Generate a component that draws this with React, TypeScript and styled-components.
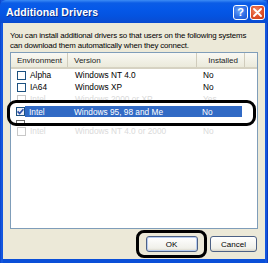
import styled, { createGlobalStyle } from 'styled-components';

const GlobalStyle = createGlobalStyle`
	html, body {
		margin: 0;
		padding: 0;
		background: #ffffff;
	}
	* {
		box-sizing: border-box;
	}
`;

interface Driver {
	env: string;
	version: string;
	installed: string;
	faint?: boolean;
	gap?: boolean;
}

const drivers: Driver[] = [
	{ env: 'Alpha', version: 'Windows NT 4.0', installed: 'No' },
	{ env: 'IA64', version: 'Windows XP', installed: 'No' },
	{ env: 'Intel', version: 'Windows 2000 or XP', installed: 'Yes', faint: true },
	{ env: 'Intel', version: 'Windows 95, 98 and Me', installed: 'No' },
	{ env: 'Intel', version: 'Windows NT 4.0 or 2000', installed: 'No', faint: true, gap: true },
];

export default function App() {
	return (
		<>
			<GlobalStyle />
			<Window>
				<TitleBar>
					<Title>Additional Drivers</Title>
					<CaptionButtons>
						<CaptionButton $kind='help'>?</CaptionButton>
						<CaptionButton $kind='close'>
							<svg width='9' height='9' viewBox='0 0 9 9'>
								<path d='M1 1 L8 8 M8 1 L1 8' stroke='white' strokeWidth='1.8' strokeLinecap='round' />
							</svg>
						</CaptionButton>
					</CaptionButtons>
				</TitleBar>
				<Body>
					<Description>
						<Line>You can install additional drivers so that users on the following systems</Line>
						<Line>can download them automatically when they connect.</Line>
					</Description>
					<ListBox>
						<HeaderRow>
							<HeaderCell $width={57}>Environment</HeaderCell>
							<HeaderCell $width={129}>Version</HeaderCell>
							<HeaderCell $width={48} $right>Installed</HeaderCell>
							<HeaderFill />
						</HeaderRow>
						{drivers.map((d, i) => (
							<Row key={i} $faint={d.faint} $gap={d.gap}>
								<Check $faint={d.faint} />
								<EnvCell>{d.env}</EnvCell>
								<VersionCell>{d.version}</VersionCell>
								<InstalledCell>{d.installed}</InstalledCell>
							</Row>
						))}
						<Callout>
							<CalloutRow>
								<Check $checked>
									<svg width='7' height='7' viewBox='0 0 7 7'>
										<path d='M0.6 3.4 L2.6 5.5 L6.4 1.2' stroke='#2b4fa8' strokeWidth='1.7' fill='none' />
									</svg>
								</Check>
								<Selected>
									<EnvCell>Intel</EnvCell>
									<VersionCell>Windows 95, 98 and Me</VersionCell>
									<InstalledCell>No</InstalledCell>
								</Selected>
							</CalloutRow>
							<PeekCheck />
						</Callout>
					</ListBox>
					<ButtonRow>
						<ButtonCallout>
							<Button $focused $width={52}>OK</Button>
						</ButtonCallout>
						<Button $width={47}>Cancel</Button>
					</ButtonRow>
				</Body>
			</Window>
		</>
	);
}

const Window = styled.div`
	width: 268px;
	height: 263px;
	display: flex;
	flex-direction: column;
	background: linear-gradient(90deg, #0842c8 0, #1a5ee6 2px, #0a4fd8 3px, #0a4fd8 265px, #1a5ee6 266px, #0634b4 268px);
	padding: 0 3px 4px 3px;
	font-family: 'Liberation Sans', Arial, sans-serif;
	user-select: none;
`;

const TitleBar = styled.div`
	height: 23px;
	margin: 0 -3px;
	padding: 0 3px 0 6px;
	display: flex;
	align-items: center;
	justify-content: space-between;
	background: linear-gradient(#3d8cf5 0, #0b5ce6 3px, #0558e8 9px, #0453e0 16px, #0a4cd2 22px, #0848cf 23px);
	border-radius: 6px 6px 0 0;
`;

const Title = styled.div`
	color: #ffffff;
	font-weight: 700;
	font-size: 10.5px;
	letter-spacing: 0.1px;
	text-shadow: 1px 1px 0 #0b2f8e;
	margin-top: 1px;
`;

const CaptionButtons = styled.div`
	display: flex;
	gap: 2px;
	margin-top: 1px;
`;

const CaptionButton = styled.div<{ $kind: 'help' | 'close' }>`
	width: 15px;
	height: 15px;
	border: 1px solid #ffffff;
	border-radius: 3px;
	display: flex;
	align-items: center;
	justify-content: center;
	color: #ffffff;
	font-weight: 700;
	font-size: 11px;
	background: ${({ $kind }) =>
		$kind === 'close'
			? 'radial-gradient(circle at 40% 35%, #f08b68 0, #e0502a 55%, #c23a14 100%)'
			: 'radial-gradient(circle at 40% 35%, #6ea4f8 0, #2f6fe6 55%, #1c55d0 100%)'};
`;

const Body = styled.div`
	flex: 1;
	background: #ece9d8;
	padding: 7px 7px 1px 7px;
	display: flex;
	flex-direction: column;
`;

const Description = styled.div`
	height: 22px;
	padding-top: 1px;
	color: #000000;
`;

const Line = styled.div`
	font-size: 7.9px;
	letter-spacing: -0.16px;
	line-height: 9.5px;
	white-space: nowrap;
`;

const ListBox = styled.div`
	position: relative;
	height: 177px;
	border: 1px solid #7f9db9;
	background: #ffffff;
	font-size: 8.3px;
	color: #000000;
`;

const HeaderRow = styled.div`
	display: flex;
	height: 16px;
	background: linear-gradient(#f9f8f3, #ebeadb);
	border-bottom: 2px solid #d6d2c2;
	font-size: 8px;
`;

const HeaderCell = styled.div<{ $width: number; $right?: boolean }>`
	width: ${({ $width }) => $width}px;
	padding: 0 6px;
	display: flex;
	align-items: center;
	justify-content: ${({ $right }) => ($right ? 'flex-end' : 'flex-start')};
	border-right: 1px solid #d0ccbc;
	color: #222222;
`;

const HeaderFill = styled.div`
	flex: 1;
`;

const Row = styled.div<{ $faint?: boolean; $gap?: boolean }>`
	display: flex;
	align-items: center;
	height: 12px;
	padding-left: 6px;
	color: ${({ $faint }) => ($faint ? '#dadada' : '#000000')};
	margin-top: ${({ $gap }) => ($gap ? '8px' : '0')};
`;

const Check = styled.div<{ $checked?: boolean; $faint?: boolean }>`
	width: 9px;
	height: 9px;
	flex-shrink: 0;
	border: 1px solid ${({ $faint }) => ($faint ? '#c8c8c8' : '#1c5180')};
	background: ${({ $checked }) => ($checked ? '#eef0f6' : '#ffffff')};
	display: flex;
	align-items: center;
	justify-content: center;
	margin-right: 3px;
`;

const EnvCell = styled.div`
	width: 46px;
	white-space: nowrap;
	padding-left: 1px;
`;

const VersionCell = styled.div`
	width: 128px;
	white-space: nowrap;
`;

const InstalledCell = styled.div`
	white-space: nowrap;
`;

const Callout = styled.div`
	position: absolute;
	left: -4px;
	top: 47px;
	width: 249px;
	height: 26px;
	border: 3px solid #000000;
	border-radius: 9px;
	background: #ffffff;
	padding: 3px 0 0 6px;
	overflow: hidden;
`;

const CalloutRow = styled.div`
	display: flex;
	align-items: center;
	height: 11px;
`;

const PeekCheck = styled.div`
	width: 9px;
	height: 9px;
	margin-top: 3px;
	border: 1px solid #6a6a6a;
	border-bottom: none;
`;

const Selected = styled.div`
	display: flex;
	align-items: center;
	width: 217px;
	height: 11px;
	margin-left: -3px;
	padding-left: 3px;
	background: #316ac5;
	color: #ffffff;
`;

const ButtonRow = styled.div`
	display: flex;
	justify-content: flex-end;
	align-items: center;
	gap: 3px;
	margin-top: 1px;
	height: 28px;
	padding-right: 1px;
`;

const ButtonCallout = styled.div`
	width: 71px;
	height: 28px;
	border: 3px solid #000000;
	border-radius: 8px;
	display: flex;
	align-items: center;
	justify-content: center;
`;

const Button = styled.div<{ $width: number; $focused?: boolean }>`
	width: ${({ $width }) => $width}px;
	height: 16px;
	border: 1px solid #4d6185;
	border-radius: 3px;
	background: linear-gradient(#ffffff, #f0f0ea 80%, #d8d5c8);
	box-shadow: ${({ $focused }) => ($focused ? 'inset 0 0 0 1px #b7cdf0' : 'none')};
	display: flex;
	align-items: center;
	justify-content: center;
	font-size: 8px;
	color: #000000;
`;
